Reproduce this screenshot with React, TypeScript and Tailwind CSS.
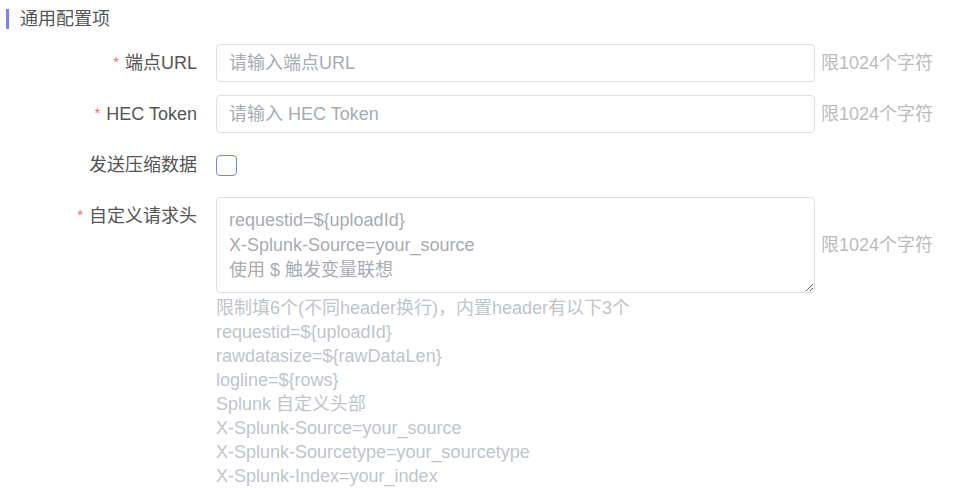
const LIMIT = '限1024个字符'

const HINT_LINES = [
  '限制填6个(不同header换行)，内置header有以下3个',
  'requestid=${uploadId}',
  'rawdatasize=${rawDataLen}',
  'logline=${rows}',
  'Splunk 自定义头部',
  'X-Splunk-Source=your_source',
  'X-Splunk-Sourcetype=your_sourcetype',
  'X-Splunk-Index=your_index',
]

function Label({ text, required }: { text: string; required?: boolean }) {
  return (
    <div className="w-[197px] shrink-0 text-right text-[18px] text-[#555]">
      {required && <span className="mr-[6px] align-[2px] text-[15px] text-[#f56c6c]">*</span>}
      {text}
    </div>
  )
}

function Limit() {
  return <span className="ml-[6px] text-[18px] text-[#bbb]">{LIMIT}</span>
}

export default function App() {
  return (
    <div
      className="h-[499px] w-[958px] overflow-hidden bg-white"
      style={{ fontFamily: '"Liberation Sans", "Noto Sans CJK SC", sans-serif' }}
    >
      <div className="flex items-center pl-[6px] pt-[9px]">
        <div className="h-[20px] w-[3px] bg-[#7b83f0]" />
        <span className="ml-[11px] text-[18px] leading-[20px] text-[#555]">通用配置项</span>
      </div>

      <div className="mt-[15px] flex flex-col">
        <div className="flex h-[38px] items-center">
          <Label text="端点URL" required />
          <input
            className="ml-[19px] h-[38px] w-[599px] rounded-[4px] border border-[#dcdfe6] px-[12px] text-[18px] text-[#555] outline-none placeholder:text-[#a8abb2]"
            placeholder="请输入端点URL"
          />
          <Limit />
        </div>

        <div className="mt-[13px] flex h-[38px] items-center">
          <Label text="HEC Token" required />
          <input
            className="ml-[19px] h-[38px] w-[599px] rounded-[4px] border border-[#dcdfe6] px-[12px] text-[18px] text-[#555] outline-none placeholder:text-[#a8abb2]"
            placeholder="请输入 HEC Token"
          />
          <Limit />
        </div>

        <div className="mt-[13px] flex h-[38px] items-center">
          <Label text="发送压缩数据" />
          <div className="ml-[19px] h-[21px] w-[21px] rounded-[4px] border border-[#7b83f0] bg-white" />
        </div>

        <div className="mt-[13px] flex items-center">
          <div className="self-start pt-[6px]">
            <Label text="自定义请求头" required />
          </div>
          <textarea
            className="ml-[19px] h-[96px] w-[599px] rounded-[4px] border border-[#dcdfe6] px-[12px] pt-[10px] text-[18px] leading-[25px] text-[#555] outline-none placeholder:text-[#a8abb2]"
            placeholder={'requestid=${uploadId}\nX-Splunk-Source=your_source\n使用 $ 触发变量联想'}
          />
          <Limit />
        </div>

        <div className="ml-[216px] mt-[3px] text-[18px] leading-[24px] text-[#c0c4cc]">
          {HINT_LINES.map((line) => (
            <div key={line}>{line}</div>
          ))}
        </div>
      </div>
    </div>
  )
}
